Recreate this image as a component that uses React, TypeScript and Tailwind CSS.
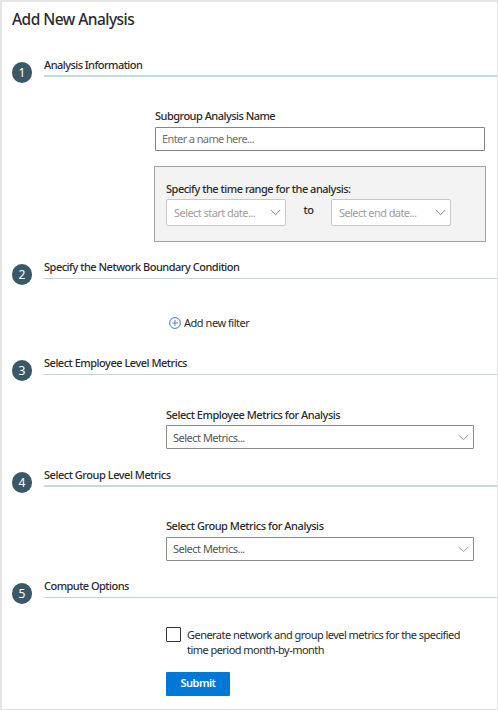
import type { ReactNode } from "react";

function Chevron({ className }: { className: string }) {
  return (
    <svg viewBox="0 0 11 7" className={`h-[7px] w-[11px] shrink-0 ${className}`} fill="none" stroke="currentColor">
      <path d="M0.8 1 L5.5 5.7 L10.2 1" />
    </svg>
  );
}

type SectionProps = {
  step: number;
  title: string;
  tracking: string;
  thick?: boolean;
  className: string;
  children: ReactNode;
};

function Section({ step, title, tracking, thick, className, children }: SectionProps) {
  return (
    <section className={`shrink-0 ${className}`}>
      <header className="flex h-[26px] pl-[10px]">
        <div className="mt-[5px] flex h-[21px] w-[20px] shrink-0 items-center justify-center rounded-full bg-[#3a5868] text-[12px] leading-none font-normal text-white">
          {step}
        </div>
        <div
          className={`ml-3 h-[20px] flex-1 ${thick ? "border-b-2 border-[#c2dce2]" : "border-b border-[#bcd6db]"}`}
        >
          <h2 className={`text-[11px] leading-4 font-medium whitespace-nowrap ${tracking}`}>{title}</h2>
        </div>
      </header>
      {children}
    </section>
  );
}

function DateSelect({ label, tracking }: { label: string; tracking: string }) {
  return (
    <button className="flex h-[27px] w-[120px] items-center justify-between rounded-[2px] border border-[#c8c8c8] bg-white pr-[4px] pl-[7px] text-[#a0a0a0]">
      <span className={`text-[11px] leading-4 whitespace-nowrap ${tracking}`}>{label}</span>
      <Chevron className="text-[#808080]" />
    </button>
  );
}

type MetricFieldProps = { label: string; tracking: string; labelHeight: string; padding: string; chevron: string };

function MetricField({ label, tracking, labelHeight, padding, chevron }: MetricFieldProps) {
  return (
    <div className="ml-[164px] w-[308px]">
      <div className={`text-[11px] leading-4 font-medium whitespace-nowrap ${labelHeight} ${tracking}`}>{label}</div>
      <button className="flex h-[24px] w-full items-center justify-between rounded-[1px] border border-[#8a8a8a] bg-white pr-[4px] pl-[6px]">
        <span className={`text-[11px] leading-4 tracking-[-0.5px] text-[#555] ${padding}`}>Select Metrics...</span>
        <Chevron className={chevron} />
      </button>
    </div>
  );
}

export default function App() {
  return (
    <main className="flex h-[710px] w-[498px] flex-col overflow-hidden border-t-2 border-r border-b border-l-2 border-[#e5e5e5] bg-white font-['Noto_Sans',sans-serif] text-[#2b2b2b]">
      <h1 className="h-[55px] shrink-0 pt-[6px] pl-[10px] text-[15.5px] leading-[22px] font-medium tracking-[-0.55px]">
        Add New Analysis
      </h1>

      <Section step={1} title="Analysis Information" tracking="tracking-[-0.55px]" thick className="h-[202px]">
        <div className="ml-[152px] w-[332px] pt-[25px]">
          <div className="h-[19px] pl-px text-[11px] leading-4 font-medium tracking-[-0.52px]">
            Subgroup Analysis Name
          </div>
          <input
            className="mx-px block h-[24px] w-[330px] rounded-[1px] border border-[#858585] px-[6px] pb-[2px] text-[11px] tracking-[-0.61px] placeholder:text-[#707070]"
            placeholder="Enter a name here..."
          />
          <div className="mt-[15px] h-[76px] border border-[#a2a2a2] bg-[#f3f3f3] pt-[14px] pl-[11px]">
            <div className="h-[18px] text-[11px] leading-4 font-medium tracking-[-0.49px]">
              Specify the time range for the analysis:
            </div>
            <div className="flex">
              <DateSelect label="Select start date..." tracking="tracking-[-0.55px]" />
              <span className="w-[45px] pt-[3px] text-center text-[11px] leading-4 font-medium tracking-[-0.4px]">to</span>
              <DateSelect label="Select end date..." tracking="tracking-[-0.58px]" />
            </div>
          </div>
        </div>
      </Section>

      <Section step={2} title="Specify the Network Boundary Condition" tracking="tracking-[-0.49px]" className="h-[96px]">
        <button className="mt-[30px] ml-[167px] flex items-center gap-[3px]">
          <svg viewBox="0 0 12 12" className="size-[12px]" fill="none" stroke="#3f79c0">
            <circle cx="6" cy="6" r="5.4" strokeWidth="1" />
            <path d="M6 3v6M3 6h6" stroke="#7778b8" />
          </svg>
          <span className="text-[11px] leading-4 tracking-[-0.46px]">Add new filter</span>
        </button>
      </Section>

      <Section step={3} title="Select Employee Level Metrics" tracking="tracking-[-0.49px]" className="h-[112px]">
        <div className="pt-[26px]">
          <MetricField
            label="Select Employee Metrics for Analysis"
            tracking="tracking-[-0.47px]"
            labelHeight="h-[18px]"
            padding="pt-[2px]"
            chevron="text-[#8299ad]"
          />
        </div>
      </Section>

      <Section step={4} title="Select Group Level Metrics" tracking="tracking-[-0.47px]" thick className="h-[111px]">
        <div className="pt-[25px]">
          <MetricField
            label="Select Group Metrics for Analysis"
            tracking="tracking-[-0.46px]"
            labelHeight="h-[19px]"
            padding="pt-0"
            chevron="text-[#b8937c]"
          />
        </div>
      </Section>

      <Section step={5} title="Compute Options" tracking="tracking-[-0.53px]" className="h-[131px]">
        <div className="ml-[164px] pt-[23px]">
          <label className="flex h-[45px] gap-[6px]">
            <input type="checkbox" className="size-[15px] shrink-0 appearance-none rounded-[1px] border border-[#333]" />
            <span className="text-[11px] leading-[15px] tracking-[-0.54px] whitespace-nowrap">
              Generate network and group level metrics for the specified
              <br />
              time period month-by-month
            </span>
          </label>
          <button className="flex h-[24px] w-[64px] items-center justify-center rounded-[1px] bg-[#0078d7] pb-[2px] text-[11px] leading-4 font-semibold tracking-[-0.5px] text-white">
            Submit
          </button>
        </div>
      </Section>
    </main>
  );
}
